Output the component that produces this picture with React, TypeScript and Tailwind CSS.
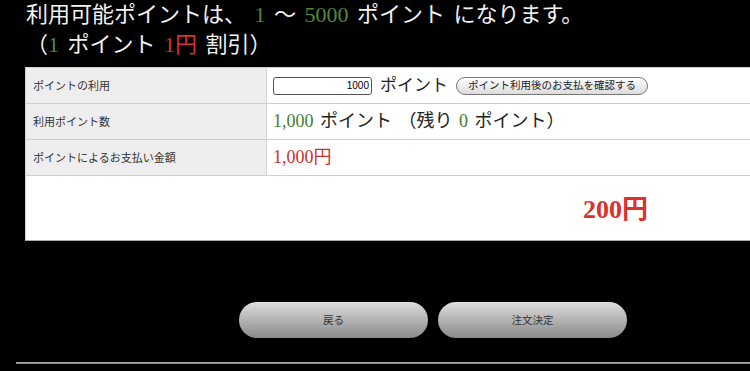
import React from "react";

const serif = { fontFamily: '"Liberation Serif", "Noto Sans CJK JP", serif' };
const sans = { fontFamily: '"Noto Sans CJK JP", "Liberation Sans", sans-serif' };

const Row: React.FC<{ label: string; children: React.ReactNode }> = ({ label, children }) => (
  <div className="flex h-9 border-b border-[#cfcfcf]">
    <div className="w-[241px] shrink-0 bg-[#eeeeee] border-r border-[#d6d6d6] flex items-center pl-[7px] text-[11px] text-[#333]" style={sans}>
      {label}
    </div>
    <div className="flex-1 flex items-center pl-[6px] bg-white">{children}</div>
  </div>
);

const App: React.FC = () => {
  return (
    <div className="w-[750px] h-[371px] bg-black overflow-hidden relative">
      <div className="pl-[26px] text-[22px] leading-[30px] text-[#f2f2f2] [word-spacing:3px]" style={serif}>
        <p>
          利用可能ポイントは、 <span className="text-[#4e8a3c]">1</span> 〜 <span className="text-[#4e8a3c]">5000</span> ポイント になります。
        </p>
        <p>
          （<span className="text-[#4e8a3c]">1</span> ポイント <span className="text-[#d8322c]">1円</span> 割引）
        </p>
      </div>

      <div className="ml-[25px] mt-[7px] w-[760px] border border-[#cfcfcf] border-b-[#aaa] bg-white">
        <Row label="ポイントの利用">
          <div className="w-[99px] h-[18px] border border-[#555] rounded-[3px] bg-white flex items-center justify-end pr-[2px] text-[10px] text-black" style={{ fontFamily: '"Liberation Sans", sans-serif' }}>
            1000
          </div>
          <span className="ml-[8px] text-[17px] text-[#222]" style={serif}>ポイント</span>
          <button className="ml-[8px] h-[18px] px-[11px] rounded-full border border-[#777] bg-gradient-to-b from-white to-[#dcdcdc] text-[10.5px] text-[#222] leading-none" style={sans}>
            ポイント利用後のお支払を確認する
          </button>
        </Row>
        <Row label="利用ポイント数">
          <span className="text-[18px] text-[#222] [word-spacing:2px]" style={serif}>
            <span className="text-[#3f7f2e]">1,000</span> ポイント （残り <span className="text-[#3f7f2e]">0</span> ポイント）
          </span>
        </Row>
        <Row label="ポイントによるお支払い金額">
          <span className="text-[18px] text-[#c8302a]" style={serif}>1,000円</span>
        </Row>
        <div className="h-[64px] flex items-center pl-[557px] pt-[2px]">
          <span className="text-[26px] font-bold text-[#d8322c]" style={serif}>200円</span>
        </div>
      </div>

      <div className="flex gap-[10px] pl-[239px] mt-[61px]">
        <button className="w-[189px] h-[36px] rounded-full bg-gradient-to-b from-[#dedede] to-[#8a8a8a] text-[10.5px] text-[#333]" style={sans}>
          戻る
        </button>
        <button className="w-[189px] h-[36px] rounded-full bg-gradient-to-b from-[#dedede] to-[#8a8a8a] text-[10.5px] text-[#333]" style={sans}>
          注文決定
        </button>
      </div>

      <div className="ml-[16px] mt-[24px] h-[2px] bg-gradient-to-b from-[#bbb] to-[#777]" />
    </div>
  );
};

export default App;
